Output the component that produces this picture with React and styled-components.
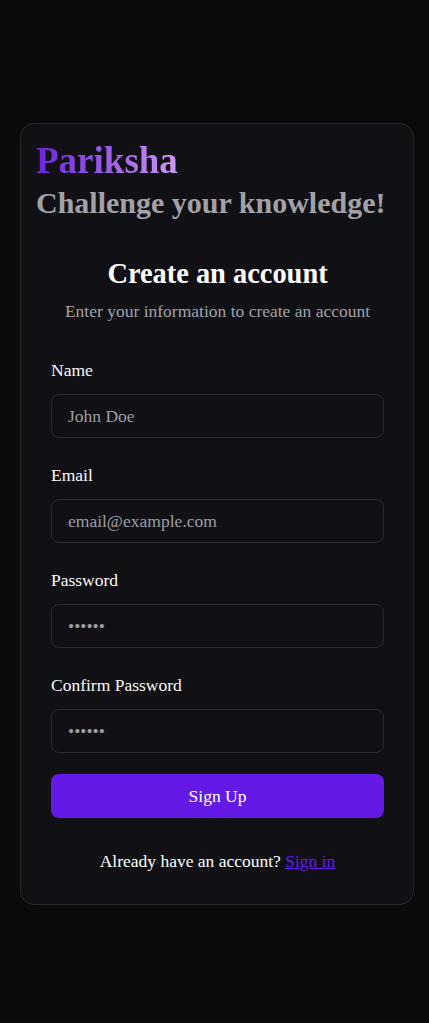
import React from "react";
import styled, { createGlobalStyle } from "styled-components";

const GlobalStyle = createGlobalStyle`
  * { box-sizing: border-box; }
  body {
    margin: 0;
    background: #0a0a0b;
    font-family: "Liberation Serif", "Times New Roman", serif;
    color: #fafafa;
  }
`;

const Page = styled.div`
  min-height: 100vh;
  display: flex;
  align-items: flex-start;
  padding: 123px 0 0 20px;
`;

const Card = styled.div`
  width: 394px;
  background: #111115;
  border: 1px solid #2a2a2e;
  border-radius: 14px;
  padding-bottom: 31px;
`;

const Header = styled.div`
  padding: 17px 15px 0;
`;

const Brand = styled.h1`
  margin: 0;
  font-size: 37px;
  line-height: 40px;
  font-weight: 700;
  background: linear-gradient(to right, #6a24dc, #cf96f7);
  -webkit-background-clip: text;
  background-clip: text;
  color: transparent;
  display: inline-block;
`;

const Tagline = styled.h2`
  margin: 4px 0 0;
  font-size: 30px;
  line-height: 36px;
  font-weight: 700;
  color: #a1a1a8;
`;

const FormArea = styled.div`
  padding: 36px 29px 0 30px;
`;

const Title = styled.h3`
  margin: 0;
  text-align: center;
  font-size: 28.4px;
  line-height: 34px;
  font-weight: 700;
  color: #ffffff;
`;

const Subtitle = styled.p`
  margin: 8px 0 0;
  text-align: center;
  font-size: 17.5px;
  line-height: 24px;
  color: #a1a1aa;
`;

const Fields = styled.div`
  display: flex;
  flex-direction: column;
  gap: 25px;
  margin-top: 35px;
`;

const Field = styled.div`
  display: flex;
  flex-direction: column;
  gap: 12px;
`;

const Label = styled.label`
  font-size: 17.5px;
  line-height: 24px;
  color: #fafafa;
`;

const Input = styled.input`
  height: 44px;
  width: 100%;
  background: #111115;
  border: 1px solid #2a2a2e;
  border-radius: 8px;
  padding: 0 16px;
  font-family: inherit;
  font-size: 17.5px;
  color: #fafafa;
  outline: none;
  &::placeholder {
    color: #9d9da4;
  }
`;

const Button = styled.button`
  margin-top: 21px;
  width: 100%;
  height: 44px;
  border: none;
  border-radius: 8px;
  background: #6419e6;
  color: #ffffff;
  font-family: inherit;
  font-size: 17.5px;
  cursor: pointer;
`;

const Footer = styled.p`
  margin: 31px 0 0;
  text-align: center;
  font-size: 17.5px;
  line-height: 24px;
  color: #ffffff;
`;

const Link = styled.a`
  color: #6419e6;
  text-decoration: underline;
`;

const fields = [
  { label: "Name", type: "text", placeholder: "John Doe" },
  { label: "Email", type: "email", placeholder: "email@example.com" },
  { label: "Password", type: "password", placeholder: "••••••" },
  { label: "Confirm Password", type: "password", placeholder: "••••••" },
];

const App = () => {
  return (
    <>
      <GlobalStyle />
      <Page>
        <Card>
          <Header>
            <Brand>Pariksha</Brand>
            <Tagline>Challenge your knowledge!</Tagline>
          </Header>
          <FormArea>
            <Title>Create an account</Title>
            <Subtitle>Enter your information to create an account</Subtitle>
            <Fields>
              {fields.map((f) => (
                <Field key={f.label}>
                  <Label>{f.label}</Label>
                  <Input type={f.type} placeholder={f.placeholder} />
                </Field>
              ))}
            </Fields>
            <Button>Sign Up</Button>
            <Footer>
              Already have an account? <Link href="#">Sign in</Link>
            </Footer>
          </FormArea>
        </Card>
      </Page>
    </>
  );
};

export default App;
